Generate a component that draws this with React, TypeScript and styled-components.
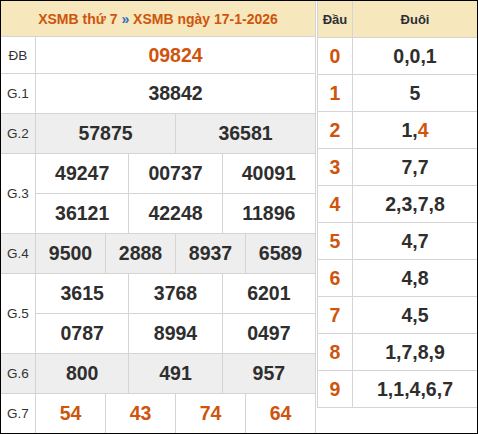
import React from "react";
import styled, { createGlobalStyle } from "styled-components";

const Global = createGlobalStyle`
  html, body { margin: 0; padding: 0; background: #fff; }
  * { box-sizing: border-box; }
`;

const LINE = "#d4d4d4";
const ORANGE = "#cf540c";
const DARK = "#2e2e2e";
const HEAD_BG = "#f6e7bd";
const GRAY_BG = "#eeeeee";

const Frame = styled.div`
  width: 478px;
  height: 434px;
  border: 1px solid #000;
  display: flex;
  gap: 1px;
  background: #fff;
  font-family: "Liberation Sans", Arial, sans-serif;
  color: ${DARK};
  overflow: hidden;
`;

const Results = styled.div`
  width: 315px;
  border-right: 1px solid ${LINE};
  display: flex;
  flex-direction: column;
`;

const Title = styled.div`
  height: 36px;
  background: ${HEAD_BG};
  border-bottom: 1px solid ${LINE};
  display: flex;
  align-items: center;
  justify-content: center;
  font-size: 14px;
  font-weight: bold;
  color: ${ORANGE};
  white-space: pre;
`;

const Sep = styled.span`
  color: #2a6fc0;
`;

const PrizeRow = styled.div<{ $shade?: boolean; $h: number; $last?: boolean }>`
  display: flex;
  height: ${(p) => p.$h}px;
  background: ${(p) => (p.$shade ? GRAY_BG : "#fff")};
  border-bottom: ${(p) => (p.$last ? "none" : `1px solid ${LINE}`)};
`;

const Label = styled.div`
  width: 35px;
  flex: none;
  border-right: 1px solid ${LINE};
  display: flex;
  align-items: center;
  justify-content: center;
  font-size: 13.5px;
  color: #333;
`;

const Values = styled.div`
  flex: 1;
  display: flex;
  flex-direction: column;
`;

const SubRow = styled.div`
  flex: 1;
  display: flex;
  & + & {
    border-top: 1px solid ${LINE};
  }
`;

const Num = styled.div<{ $hot?: boolean }>`
  flex: 1 1 0;
  display: flex;
  align-items: center;
  justify-content: center;
  font-size: 19.5px;
  font-weight: bold;
  color: ${(p) => (p.$hot ? ORANGE : DARK)};
  & + & {
    border-left: 1px solid ${LINE};
  }
`;

const Loto = styled.div`
  flex: 1;
  align-self: flex-start;
  border-left: 1px solid ${LINE};
  border-bottom: 1px solid ${LINE};
  display: flex;
  flex-direction: column;
`;

const LotoRow = styled.div<{ $head?: boolean }>`
  display: flex;
  height: ${(p) => (p.$head ? 36 : 37)}px;
  background: ${(p) => (p.$head ? HEAD_BG : "#fff")};
  & + & {
    border-top: 1px solid ${LINE};
  }
  &:first-child {
    height: 36px;
  }
`;

const HeadCell = styled.div<{ $narrow?: boolean }>`
  ${(p) => (p.$narrow ? "width: 35px; flex: none; border-right: 1px solid " + LINE + ";" : "flex: 1;")}
  display: flex;
  align-items: center;
  justify-content: center;
  font-size: 13px;
  font-weight: bold;
  color: #2b2f38;
`;

const DauCell = styled.div`
  width: 35px;
  flex: none;
  border-right: 1px solid ${LINE};
  display: flex;
  align-items: center;
  justify-content: center;
  font-size: 19.5px;
  font-weight: bold;
  color: ${ORANGE};
`;

const DuoiCell = styled.div`
  flex: 1;
  display: flex;
  align-items: center;
  justify-content: center;
  font-size: 19.5px;
  font-weight: bold;
  color: ${DARK};
`;

const Hot = styled.span`
  color: ${ORANGE};
`;

type Prize = { label: string; rows: string[][]; shade?: boolean; hot?: boolean };

const prizes: Prize[] = [
  { label: "ĐB", rows: [["09824"]], hot: true },
  { label: "G.1", rows: [["38842"]] },
  { label: "G.2", rows: [["57875", "36581"]], shade: true },
  { label: "G.3", rows: [["49247", "00737", "40091"], ["36121", "42248", "11896"]] },
  { label: "G.4", rows: [["9500", "2888", "8937", "6589"]], shade: true },
  { label: "G.5", rows: [["3615", "3768", "6201"], ["0787", "8994", "0497"]] },
  { label: "G.6", rows: [["800", "491", "957"]], shade: true },
  { label: "G.7", rows: [["54", "43", "74", "64"]], hot: true },
];

const loto: { d: string; tails: string[]; hot?: number[] }[] = [
  { d: "0", tails: ["0", "0", "1"] },
  { d: "1", tails: ["5"] },
  { d: "2", tails: ["1", "4"], hot: [1] },
  { d: "3", tails: ["7", "7"] },
  { d: "4", tails: ["2", "3", "7", "8"] },
  { d: "5", tails: ["4", "7"] },
  { d: "6", tails: ["4", "8"] },
  { d: "7", tails: ["4", "5"] },
  { d: "8", tails: ["1", "7", "8", "9"] },
  { d: "9", tails: ["1", "1", "4", "6", "7"] },
];

export default function App() {
  return (
    <>
      <Global />
      <Frame>
        <Results>
          <Title>
            XSMB thứ 7 <Sep>»</Sep> XSMB ngày 17-1-2026
          </Title>
          {prizes.map((p, i) => {
            const first = i === 0;
            const last = i === prizes.length - 1;
            const h = first ? 37 : last ? 39 : p.rows.length * 40;
            return (
              <PrizeRow key={p.label} $shade={p.shade} $h={h} $last={last}>
                <Label>{p.label}</Label>
                <Values>
                  {p.rows.map((r, j) => (
                    <SubRow key={j}>
                      {r.map((n) => (
                        <Num key={n} $hot={p.hot}>
                          {n}
                        </Num>
                      ))}
                    </SubRow>
                  ))}
                </Values>
              </PrizeRow>
            );
          })}
        </Results>
        <Loto>
          <LotoRow $head>
            <HeadCell $narrow>Đầu</HeadCell>
            <HeadCell>Đuôi</HeadCell>
          </LotoRow>
          {loto.map((r) => (
            <LotoRow key={r.d}>
              <DauCell>{r.d}</DauCell>
              <DuoiCell>
                {r.tails.map((t, k) => (
                  <React.Fragment key={k}>
                    {k > 0 && ","}
                    {r.hot && r.hot.includes(k) ? <Hot>{t}</Hot> : t}
                  </React.Fragment>
                ))}
              </DuoiCell>
            </LotoRow>
          ))}
        </Loto>
      </Frame>
    </>
  );
}
